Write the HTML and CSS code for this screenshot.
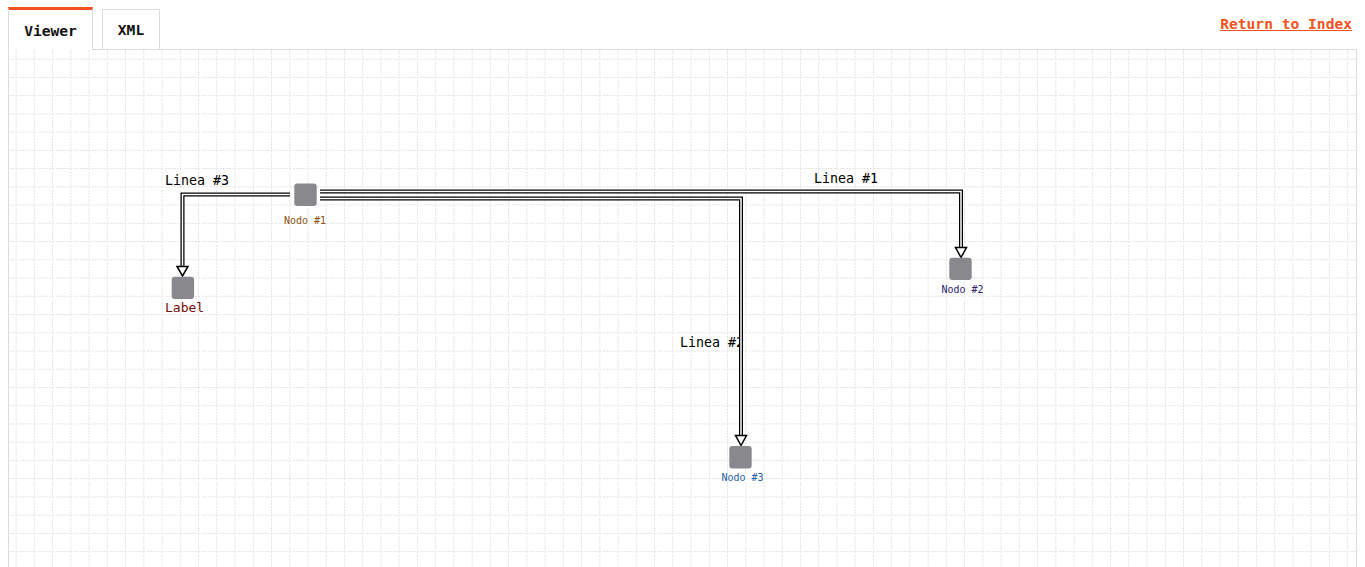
FILE: index.html
```html
<!DOCTYPE html>
<html lang="en">
  <head>
    <meta charset="UTF-8" />
    <meta name="viewport" content="width=device-width, initial-scale=1.0" />
    <title>Graph Viewer</title>
    <link rel="stylesheet" href="styles.css">
  </head>

  <body>
    <div class="top">
      <!-- Tabs to switch between the diagram and its source -->
      <div class="tabs">
        <div class="tab active">Viewer</div>
        <div class="tab">XML</div>
      </div>
      <a class="back" href="#">Return to Index</a>
    </div>

    <div class="canvas">
      <svg class="graph" width="1347" height="520" viewBox="9 50 1347 520">
        <defs>
          <pattern id="grid" patternUnits="userSpaceOnUse" x="7" y="50" width="18.24" height="18.24">
            <path class="grid-line" d="M9.5 0 V18.24 M0 9.5 H18.24" />
          </pattern>
        </defs>
        <rect x="9" y="50" width="1347" height="520" fill="url(#grid)" />

        <!-- edge labels sit under the edges -->
        <text class="edge-label" x="165" y="185">Linea #3</text>
        <text class="edge-label" x="814" y="183">Linea #1</text>
        <text class="edge-label" x="680" y="347">Linea #2</text>

        <!-- Linea #1 : Nodo #1 -> Nodo #2 -->
        <path class="edge-outer" d="M320 191.5 H961 V248" />
        <path class="edge-inner" d="M320 191.5 H961 V248" />
        <polygon class="arrow" points="955.5,247.5 966.5,247.5 961,257.5" />

        <!-- Linea #2 : Nodo #1 -> Nodo #3 -->
        <path class="edge-outer" d="M320 198.5 H741 V436" />
        <path class="edge-inner" d="M320 198.5 H741 V436" />
        <polygon class="arrow" points="735.5,435.5 746.5,435.5 741,445.5" />

        <!-- Linea #3 : Nodo #1 -> Label -->
        <path class="edge-outer" d="M290 194.5 H182.5 V267" />
        <path class="edge-inner" d="M290 194.5 H182.5 V267" />
        <polygon class="arrow" points="177,266.5 188,266.5 182.5,276" />

        <!-- nodes -->
        <rect class="node" x="294.3" y="183.5" width="22.4" height="22.4" rx="3" />
        <text class="node-label n1" x="284" y="223.5">Nodo #1</text>

        <rect class="node" x="949.3" y="257.7" width="22.4" height="22.4" rx="3" />
        <text class="node-label n2" x="941.5" y="293">Nodo #2</text>

        <rect class="node" x="729.3" y="446" width="22.4" height="22.4" rx="3" />
        <text class="node-label n3" x="721.5" y="481">Nodo #3</text>

        <rect class="node" x="171.7" y="276.7" width="22.4" height="22.4" rx="3" />
        <text class="label-text" x="165" y="312">Label</text>
      </svg>
    </div>
  </body>
</html>
```

FILE: styles.css
```css
* {
  box-sizing: border-box;
}

body {
  margin: 0 8px;
  background-color: white;
  font-family: "DejaVu Sans Mono", monospace;
  overflow: hidden;
}

.top {
  display: flex;
  justify-content: space-between;
  align-items: flex-end;
  padding-top: 7px;
}

.tabs {
  display: flex;
  align-items: flex-end;
  gap: 9px;
}

.tab {
  display: flex;
  align-items: center;
  justify-content: center;
  width: 58px;
  height: 40px;
  border: 1px solid #dcdcdc;
  border-bottom: none;
  font-size: 14.6px;
  font-weight: bold;
  color: #111;
  background-color: white;
}

.tab.active {
  position: relative;
  width: 85px;
  height: 43px;
  margin-bottom: -1px;
  padding-top: 1px;
  border-top: 3px solid #f4511e;
}

.back {
  align-self: flex-start;
  margin-top: 8px;
  margin-right: 5px;
  font-size: 14.6px;
  font-weight: bold;
  line-height: 17px;
  color: #f4511e;
}

.canvas {
  height: 530px;
  border: 1px solid #dcdcdc;
}

.graph {
  display: block;
}

.grid-line {
  fill: none;
  stroke: #e2e2e2;
  stroke-width: 1;
  stroke-dasharray: 2 1;
  shape-rendering: crispEdges;
}

.edge-outer {
  fill: none;
  stroke: #000;
  stroke-width: 4;
}

.edge-inner {
  fill: none;
  stroke: #fff;
  stroke-width: 1.5;
}

.arrow {
  fill: #fff;
  stroke: #000;
  stroke-width: 1.5;
}

.node {
  fill: #89888d;
}

.edge-label {
  font-family: "DejaVu Sans Mono", monospace;
  font-size: 13.3px;
  fill: #000;
}

.node-label {
  font-family: "DejaVu Sans Mono", monospace;
  font-size: 10px;
}

.n1 {
  fill: #8a5410;
}

.n2 {
  fill: #2a2470;
}

.n3 {
  fill: #2763a6;
}

.label-text {
  font-family: "DejaVu Sans Mono", monospace;
  font-size: 13px;
  fill: #7a0c0c;
}
```
